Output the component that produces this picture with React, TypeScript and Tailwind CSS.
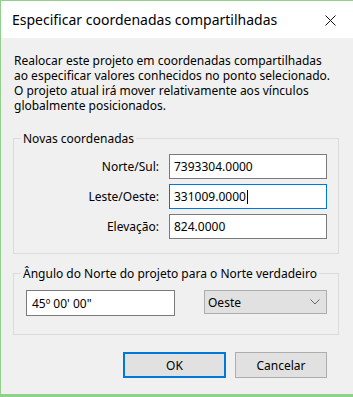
import React from 'react';

const Field: React.FC<{ value: string; focused?: boolean }> = ({ value, focused }) => (
  <div
    className={`h-[25px] bg-white border flex items-center pl-[4px] ${
      focused ? 'border-[#0078d7]' : 'border-[#7a7a7a]'
    }`}
  >
    <span>{value}</span>
    {focused && <span className="inline-block w-px h-[14px] bg-black ml-px" />}
  </div>
);

export default function App() {
  return (
    <div className="w-[353px] h-[397px] bg-[#f0f0f0] border-l border-t border-b-[3px] border-[#8fd18a] flex flex-col font-['Noto_Sans',sans-serif] text-[12px] leading-[15px] text-black overflow-hidden">
      {/* title bar */}
      <div className="h-[37px] shrink-0 bg-white flex items-center justify-between pl-[11px] pr-[17px]">
        <span className="text-[14px] leading-[20px]">Especificar coordenadas compartilhadas</span>
        <svg width="11" height="11" viewBox="0 0 11 11" className="mt-[1px]">
          <path d="M0.5 0.5 L10.5 10.5 M10.5 0.5 L0.5 10.5" stroke="#111" strokeWidth="1" fill="none" />
        </svg>
      </div>

      <div className="flex flex-col pl-[12px] pr-[14px] pt-[15px]">
        <p className="pl-[1px]">
          Realocar este projeto em coordenadas compartilhadas
          <br />
          ao especificar valores conhecidos no ponto selecionado.
          <br />
          O projeto atual irá mover relativamente aos vínculos
          <br />
          globalmente posicionados.
        </p>

        <fieldset className="mt-[18px] border border-[#dcdcdc] pt-[8px] pb-[14px]">
          <legend className="ml-[7px] px-[2px]">Novas coordenadas</legend>
          <div className="grid grid-cols-[145px_158px] gap-x-[10px] gap-y-[5px] items-center">
            <span className="text-right">Norte/Sul:</span>
            <Field value="7393304.0000" />
            <span className="text-right">Leste/Oeste:</span>
            <Field value="331009.0000" focused />
            <span className="text-right">Elevação:</span>
            <Field value="824.0000" />
          </div>
        </fieldset>

        <fieldset className="mt-[12px] border border-[#dcdcdc] pt-[9px] pb-[18px]">
          <legend className="ml-[7px] px-[2px]">Ângulo do Norte do projeto para o Norte verdadeiro</legend>
          <div className="flex items-start pl-[12px]">
            <div className="w-[149px] h-[26px] bg-white border border-[#7a7a7a] flex items-center pl-[5px]">
              45º 00' 00"
            </div>
            <div className="ml-[29px] w-[123px] h-[24px] bg-[#e1e1e1] border border-[#adadad] flex items-center justify-between pl-[3px] pr-[6px]">
              <span>Oeste</span>
              <svg width="10" height="6" viewBox="0 0 10 6">
                <path d="M0.5 0.5 L5 5 L9.5 0.5" stroke="#666" strokeWidth="1" fill="none" />
              </svg>
            </div>
          </div>
        </fieldset>

        <div className="flex justify-end gap-[9px] pr-[12px] mt-[17px]">
          <button className="w-[103px] h-[26px] bg-[#e1e1e1] border-2 border-[#0078d7]">OK</button>
          <button className="w-[92px] h-[26px] bg-[#e1e1e1] border border-[#adadad]">Cancelar</button>
        </div>
      </div>
    </div>
  );
}
